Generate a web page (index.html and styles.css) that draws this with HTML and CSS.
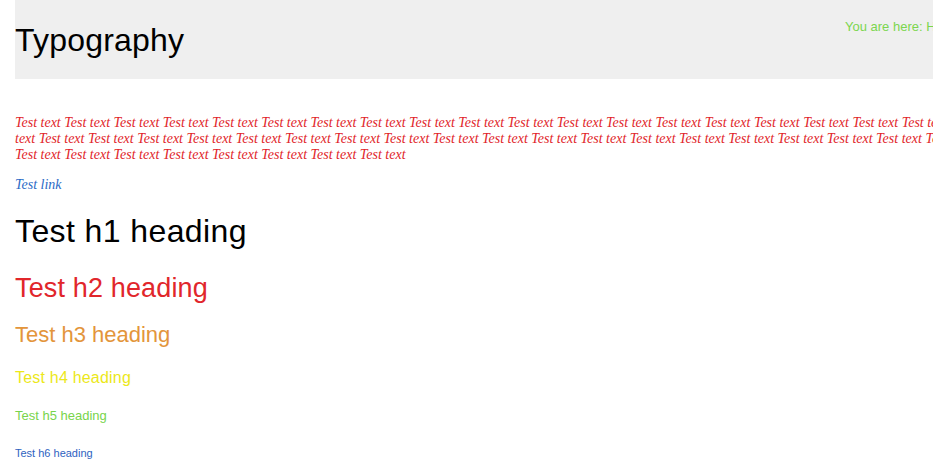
FILE: index.html
```html
<!DOCTYPE html>
<html lang="en">
<head>
<meta charset="utf-8">
<title>Typography</title>
<link rel="stylesheet" href="styles.css">
</head>
<body>
<div class="page">
  <div class="container">
    <header class="header">
      <h1 class="page-title">Typography</h1>
      <div class="breadcrumb">You are here: Home</div>
    </header>
    <main class="content">
      <p class="test-text">Test text Test text Test text Test text Test text Test text Test text Test text Test text Test text Test text Test text Test text Test text Test text Test text Test text Test text Test text Test text Test text Test text Test text Test text Test text Test text Test text Test text Test text Test text Test text Test text Test text Test text Test text Test text Test text Test text Test text Test text Test text Test text Test text Test text Test text Test text Test text</p>
      <p class="link-row"><a class="test-link" href="#">Test link</a></p>
      <h1 class="h1">Test h1 heading</h1>
      <h2 class="h2">Test h2 heading</h2>
      <h3 class="h3">Test h3 heading</h3>
      <h4 class="h4">Test h4 heading</h4>
      <h5 class="h5">Test h5 heading</h5>
      <h6 class="h6">Test h6 heading</h6>
    </main>
  </div>
</div>
</body>
</html>
```

FILE: styles.css
```css
html, body {
  margin: 0;
  padding: 0;
  background: #ffffff;
}

.page {
  width: 100%;
  height: 472px;
  overflow: hidden;
}

.container {
  width: 985px;
  margin-left: 15px;
  font-family: "Liberation Sans", Arial, sans-serif;
}

.header {
  display: flex;
  align-items: flex-start;
  height: 79px;
  background: #efefef;
}

.page-title {
  flex: 0 0 830px;
  margin: 0;
  padding-top: 24px;
  font-size: 32px;
  line-height: 32px;
  font-weight: normal;
  letter-spacing: 0.2px;
  color: #000000;
}

.breadcrumb {
  margin-top: 19px;
  font-size: 13px;
  line-height: 16px;
  color: #7bd64e;
  white-space: nowrap;
}

.content {
  display: flex;
  flex-direction: column;
}

.test-text,
.link-row {
  width: 970px;
  margin: 0;
  font-family: "Liberation Serif", "Times New Roman", serif;
  font-style: italic;
  font-size: 14px;
  line-height: 16px;
}

.test-text {
  margin-top: 35.5px;
  color: #e1252a;
}

.link-row {
  margin-top: 14px;
}

.test-link {
  color: #2b6bc6;
  text-decoration: none;
}

.h1, .h2, .h3, .h4, .h5, .h6 {
  margin: 0;
  font-weight: normal;
  line-height: 1.2;
  font-family: "Liberation Sans", Arial, sans-serif;
}

.h1 {
  margin-top: 19.5px;
  font-size: 32px;
  letter-spacing: 0.4px;
  color: #000000;
}

.h2 {
  margin-top: 22px;
  font-size: 27px;
  letter-spacing: 0.15px;
  color: #e1262b;
}

.h3 {
  margin-top: 17px;
  font-size: 22px;
  color: #e3953b;
}

.h4 {
  margin-top: 20px;
  font-size: 16px;
  letter-spacing: 0.2px;
  color: #ece81a;
}

.h5 {
  margin-top: 20.5px;
  font-size: 13px;
  color: #78d44c;
}

.h6 {
  margin-top: 24px;
  font-size: 11px;
  color: #2e62bf;
}
```
